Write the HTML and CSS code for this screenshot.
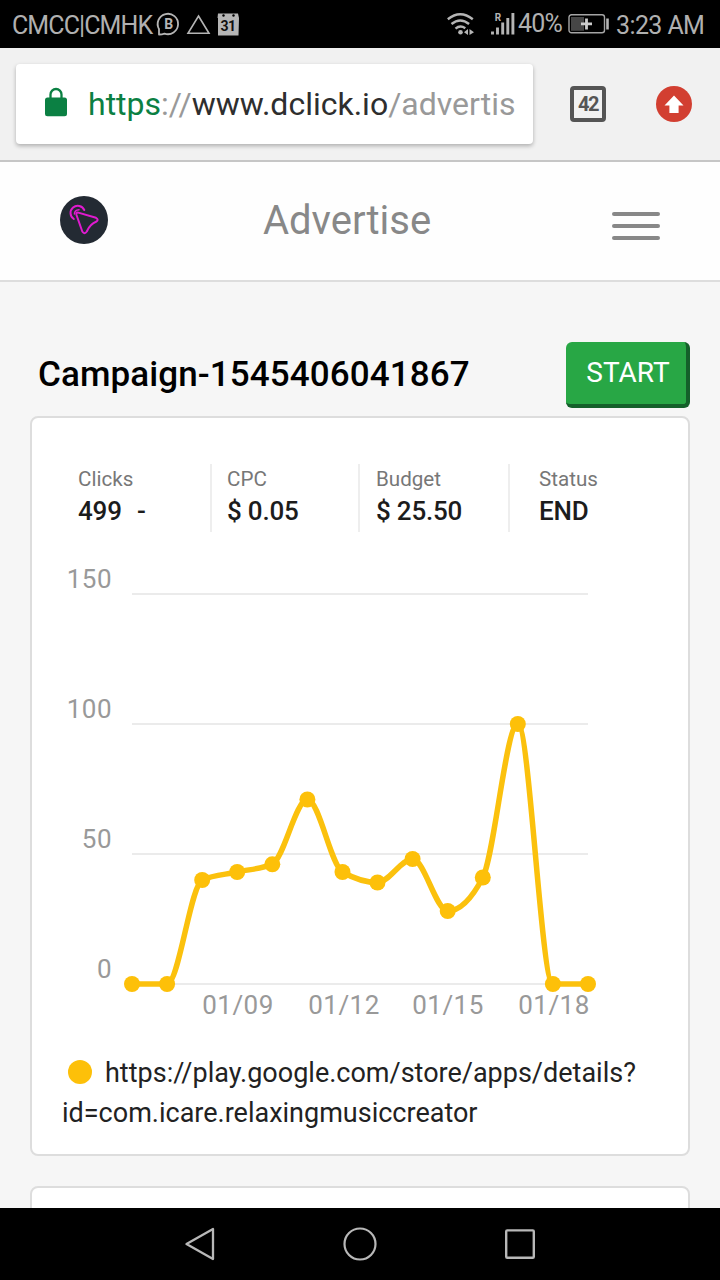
FILE: index.html
```html
<!DOCTYPE html>
<html lang="en">
<head>
    <meta charset="UTF-8">
    <meta name="viewport" content="width=device-width, initial-scale=1.0">
    <title>Advertise</title>
    <link rel="stylesheet" href="styles.css">
</head>
<body>
    <div class="phone">
        <!-- Status bar -->
        <div class="status-bar">
            <span class="carrier">CMCC|CMHK</span>
            <svg class="status-left-icons" width="84" height="28" viewBox="0 0 84 28">
                <path d="M3 24.500 V19 A10.200 10.200 0 1 1 8.500 23.600 Q6 24.500 3 24.500 Z" fill="none" stroke="#b5b5b5" stroke-width="1.800" stroke-linejoin="round"/>
                <text class="icon-letter" x="12.800" y="19" text-anchor="middle">B</text>
                <path d="M42.500 6 L53 23.300 H32 Z" fill="none" stroke="#b5b5b5" stroke-width="1.600"/>
                <path d="M62 3.500 H82 L83 8 L82.500 25.500 H62 L62 8 L61.500 8 Z" fill="#b5b5b5"/>
                <circle cx="67.500" cy="5.500" r="1.200" fill="#000"/>
                <circle cx="77.500" cy="5.500" r="1.200" fill="#000"/>
                <text class="icon-date" x="72" y="21" text-anchor="middle">31</text>
            </svg>
            <svg class="status-right-icons" width="70" height="28" viewBox="0 0 70 28">
                <g fill="none" stroke="#b5b5b5" stroke-width="2.400">
                    <path d="M-0.200 9.200 Q12.200 -0.800 24.800 9.200"/>
                    <path d="M3.500 14 Q12.200 6.800 21.100 14"/>
                    <path d="M7.500 18.600 Q12.200 14.600 17.300 18.200"/>
                </g>
                <circle cx="12.500" cy="22.300" r="2.300" fill="#b5b5b5"/>
                <path d="M16 22.300 L20 19 V25 Z M21.500 19 L26 22.300 L21.500 25 Z" fill="#b5b5b5"/>
                <text class="icon-roaming" x="46.800" y="11">R</text>
                <path d="M44.500 24.500 v-3 M49.500 24.500 v-7 M54.700 24.500 v-12 M59.800 24.500 v-16.500 M64.900 24.500 v-21.500" stroke="#b5b5b5" stroke-width="2.900"/>
            </svg>
            <span class="percent">40%</span>
            <svg class="battery" width="42" height="22" viewBox="0 0 42 22">
                <rect x="1" y="1.800" width="35.500" height="18" rx="2.500" fill="none" stroke="#a5a5a5" stroke-width="1.400"/>
                <rect x="3" y="4" width="13" height="13.800" fill="#464646"/>
                <path d="M13 10.900 H24 M18.500 5.400 V16.400" stroke="#ccc" stroke-width="2.800"/>
                <path d="M39.500 5.500 V16.500" stroke="#b5b5b5" stroke-width="2.600"/>
            </svg>
            <span class="clock">3:23 AM</span>
        </div>

        <!-- Browser toolbar -->
        <div class="browser-bar">
            <div class="omnibox">
                <svg class="lock" width="24" height="30" viewBox="0 0 24 30">
                    <path d="M6.500 12 V7.500 A5.500 5.500 0 0 1 17.500 7.500 V12" fill="none" stroke="#0b8043" stroke-width="2.300"/>
                    <rect x="1" y="10.500" width="22" height="18.800" rx="2.500" fill="#0b8043"/>
                </svg>
                <div class="url"><span class="url-scheme">https</span><span class="url-dim">://</span>www.dclick.io<span class="url-dim">/advertis</span></div>
            </div>
            <div class="tab-count">42</div>
            <svg class="update" width="36" height="36" viewBox="0 0 36 36">
                <circle cx="18" cy="18" r="18" fill="#d23f31"/>
                <path d="M18 9.500 L27.500 19.500 H22.600 V27 H13.400 V19.500 H8.500 Z" fill="#fff"/>
            </svg>
        </div>

        <!-- Site header -->
        <header class="site-header">
            <svg class="logo" width="48" height="48" viewBox="0 0 48 48">
                <circle cx="24" cy="24" r="24" fill="#232a33"/>
                <g fill="none" stroke="#e01bd0" stroke-width="2" stroke-linecap="round" stroke-linejoin="round">
                    <path d="M18.300 16.600 L36 21.800 Q39 23.500 36.500 25.500 Q30 28 26.800 35.500 Q24.500 38.800 22.300 35.500 L16.500 19 Q16 16 18.300 16.600 Z"/>
                    <path d="M13.800 23 A7.200 7.200 0 1 1 24.300 14"/>
                    <path d="M14.500 18 Q14.500 14.300 19 13.800" stroke-width="1.600"/>
                </g>
            </svg>
            <h1 class="site-title">Advertise</h1>
            <div class="menu">
                <span></span>
                <span></span>
                <span></span>
            </div>
        </header>

        <main class="content">
            <div class="campaign-head">
                <h2 class="campaign-name">Campaign-1545406041867</h2>
                <button class="start-button">START</button>
            </div>

            <section class="card">
                <div class="stats">
                    <div class="stat">
                        <div class="stat-label">Clicks</div>
                        <div class="stat-value">499 <span class="stat-extra">-</span></div>
                    </div>
                    <div class="stat stat-cpc">
                        <div class="stat-label">CPC</div>
                        <div class="stat-value">$ 0.05</div>
                    </div>
                    <div class="stat">
                        <div class="stat-label">Budget</div>
                        <div class="stat-value">$ 25.50</div>
                    </div>
                    <div class="stat stat-last">
                        <div class="stat-label">Status</div>
                        <div class="stat-value">END</div>
                    </div>
                </div>

                <!-- Clicks per day -->
                <svg class="chart" width="596" height="470" viewBox="0 0 596 470">
                    <path class="grid-line" d="M70 34 H526 M70 164 H526 M70 294 H526 M70 424 H526"/>
                    <g class="axis-label" text-anchor="end">
                        <text x="50" y="28">150</text>
                        <text x="50" y="158">100</text>
                        <text x="50" y="288">50</text>
                        <text x="50" y="418">0</text>
                    </g>
                    <g class="axis-label" text-anchor="middle">
                        <text x="176" y="454">01/09</text>
                        <text x="282" y="454">01/12</text>
                        <text x="386" y="454">01/15</text>
                        <text x="492" y="454">01/18</text>
                    </g>
                    <path class="line" d="M70 424 H105.100
                        C116.800 424 128.500 325.300 140.200 320
                        C151.900 314.700 163.500 314.700 175.200 312
                        C186.900 309.300 198.600 309.300 210.300 304
                        C222 298.700 233.700 239.500 245.400 239.500
                        C257.100 239.500 268.800 305.300 280.500 312
                        C292.200 318.700 303.800 322.500 315.500 322.500
                        C327.200 322.500 338.900 299 350.600 299
                        C362.300 299 374 351 385.700 351
                        C397.400 351 409.100 340 420.800 317.500
                        C432.500 294.800 444.100 164 455.800 164
                        C467.500 164 479.200 424 490.900 424 H526"/>
                    <g class="dots">
                        <circle cx="70" cy="424" r="8"/>
                        <circle cx="105.100" cy="424" r="8"/>
                        <circle cx="140.200" cy="320" r="8"/>
                        <circle cx="175.200" cy="312" r="8"/>
                        <circle cx="210.300" cy="304.300" r="8"/>
                        <circle cx="245.400" cy="239.500" r="8"/>
                        <circle cx="280.500" cy="312" r="8"/>
                        <circle cx="315.500" cy="322.500" r="8"/>
                        <circle cx="350.600" cy="299" r="8"/>
                        <circle cx="385.700" cy="351" r="8"/>
                        <circle cx="420.800" cy="317.500" r="8"/>
                        <circle cx="455.800" cy="164" r="8"/>
                        <circle cx="490.900" cy="424" r="8"/>
                        <circle cx="526" cy="424" r="8"/>
                    </g>
                </svg>

                <p class="legend"><span class="legend-dot"></span>https://play.google.com/store/apps/details?<br>id=com.icare.relaxingmusiccreator</p>
            </section>

            <section class="card"></section>
        </main>

        <!-- Navigation bar -->
        <nav class="nav-bar">
            <svg width="32" height="36" viewBox="0 0 32 36">
                <path d="M29 3 V33 L2.500 18 Z" fill="none" stroke="#b8b8b8" stroke-width="2.300" stroke-linejoin="round"/>
            </svg>
            <svg width="36" height="36" viewBox="0 0 36 36">
                <circle cx="18" cy="18" r="15.500" fill="none" stroke="#b8b8b8" stroke-width="2.200"/>
            </svg>
            <svg width="32" height="36" viewBox="0 0 32 36">
                <rect x="2.200" y="4.400" width="27.600" height="27.400" rx="1" fill="none" stroke="#b8b8b8" stroke-width="2.400"/>
            </svg>
        </nav>
    </div>
</body>
</html>
```

FILE: styles.css
```css
* {
    box-sizing: border-box;
}
body {
    margin: 0;
    font-family: Roboto, "Liberation Sans", sans-serif;
    background: #f6f6f6;
}
svg {
    display: block;
    flex: none;
    overflow: visible;
}
.phone {
    width: 720px;
    height: 1280px;
    display: flex;
    flex-direction: column;
    overflow: hidden;
}

/* status bar */
.status-bar {
    flex: none;
    height: 48px;
    display: flex;
    align-items: center;
    padding: 2px 16px 0 12px;
    background: #000;
    color: #b0b0b0;
    font-size: 25px;
    white-space: nowrap;
}
.carrier {
    width: 144px;
    letter-spacing: -0.9px;
}
.status-left-icons {
    margin-top: -2px;
}
.status-right-icons {
    margin: -2px 0 0 auto;
}
.percent {
    width: 50px;
    margin-top: -3px;
    letter-spacing: -0.8px;
}
.battery {
    margin-top: -3px;
}
.clock {
    width: 88px;
    margin-left: 6px;
    letter-spacing: -0.6px;
}
.icon-letter {
    font-size: 14px;
    font-weight: 700;
    fill: #b5b5b5;
}
.icon-date {
    font-size: 14px;
    font-weight: 700;
    letter-spacing: -0.6px;
    fill: #111;
}
.icon-roaming {
    font-size: 10px;
    font-weight: 700;
    fill: #b5b5b5;
}

/* browser toolbar */
.browser-bar {
    flex: none;
    height: 114px;
    display: flex;
    align-items: center;
    padding: 1px 28px 1px 16px;
    background: #f1f1f1;
    border-bottom: 2px solid #c6c6c6;
}
.omnibox {
    width: 517px;
    height: 80px;
    display: flex;
    align-items: center;
    padding-left: 28px;
    background: #fff;
    border-radius: 4px;
    box-shadow: 0 2px 4px rgba(0, 0, 0, 0.28);
}
.lock {
    margin-top: -5px;
}
.url {
    margin-left: 20px;
    font-size: 32px;
    color: #2e2e2e;
    white-space: nowrap;
}
.url-scheme {
    color: #0b8043;
}
.url-dim {
    color: #999;
}
.tab-count {
    width: 36px;
    height: 36px;
    margin-left: 37px;
    border: 4px solid #555;
    border-radius: 4px;
    color: #555;
    font-size: 20px;
    font-weight: 700;
    line-height: 29px;
    letter-spacing: -1.4px;
    text-align: center;
}
.update {
    margin-left: auto;
}

/* site header */
.site-header {
    flex: none;
    height: 120px;
    display: flex;
    justify-content: space-between;
    align-items: center;
    padding: 0 60px 3px;
    background: #fefefe;
    border-bottom: 2px solid #ddd;
}
.site-title {
    margin: 0;
    padding: 2px 26px 0 0;
    font-size: 40px;
    font-weight: 400;
    color: #888;
}
.menu {
    width: 48px;
    display: flex;
    flex-direction: column;
    gap: 8px;
    padding-top: 12px;
}
.menu span {
    height: 4px;
    border-radius: 2px;
    background: #888;
}

/* campaign */
.content {
    flex: 1;
    min-height: 0;
    overflow: hidden;
    padding: 60px 30px 0;
}
.campaign-head {
    display: flex;
    justify-content: space-between;
    align-items: center;
    height: 66px;
    padding-left: 8px;
    margin-bottom: 8px;
}
.campaign-name {
    margin: 0;
    padding-bottom: 2px;
    font-size: 35px;
    font-weight: 500;
    letter-spacing: 0.1px;
    color: #000;
}
.start-button {
    width: 124px;
    height: 66px;
    padding: 0 0 2px 4px;
    border: 0 solid #14602a;
    border-width: 0 4px 4px 0;
    border-radius: 6px;
    background: #28a745;
    color: #fff;
    font-family: inherit;
    font-size: 28px;
}
.card {
    height: 740px;
    padding: 46px 30px 0;
    margin-bottom: 30px;
    border: 2px solid #ddd;
    border-radius: 8px;
    background: #fff;
}
.stats {
    display: grid;
    grid-template-columns: 150px 148px 150px 1fr;
    height: 68px;
}
.stat {
    padding: 3px 0 0 16px;
    border-right: 2px solid #eee;
    white-space: nowrap;
}
.stat-cpc {
    padding-left: 15px;
}
.stat-last {
    padding-left: 29px;
    border-right: none;
}
.stat-label {
    font-size: 20.6px;
    line-height: 24px;
    color: #777;
}
.stat-value {
    margin-top: 4px;
    font-size: 26px;
    font-weight: 500;
    line-height: 32px;
    letter-spacing: -0.2px;
    color: #1c1c1c;
}
.stat-extra {
    margin-left: 9px;
}

/* chart */
.chart {
    margin-top: 28px;
}
.grid-line {
    stroke: #ebebeb;
    stroke-width: 2;
}
.axis-label {
    font-size: 26px;
    letter-spacing: 0.5px;
    fill: #999;
}
.line {
    fill: none;
    stroke: #fbc10d;
    stroke-width: 5.5;
}
.dots {
    fill: #fdc009;
}
.legend {
    margin: 23px 0 0;
    font-size: 27px;
    line-height: 40px;
    color: #222;
    white-space: nowrap;
}
.legend-dot {
    display: inline-block;
    width: 24px;
    height: 24px;
    margin: 0 13px 0 6px;
    border-radius: 50%;
    background: #fdc009;
    vertical-align: -2px;
}

/* navigation bar */
.nav-bar {
    flex: none;
    height: 72px;
    display: flex;
    justify-content: center;
    align-items: center;
    gap: 126px;
    background: #000;
}
```
